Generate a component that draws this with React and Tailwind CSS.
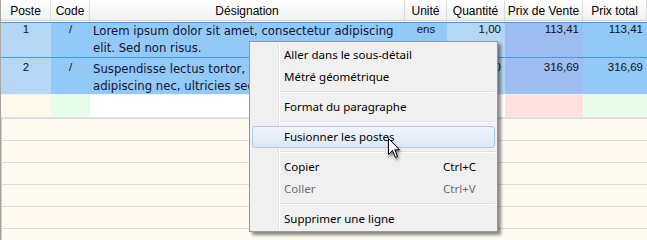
// Bordereau grid with a Windows 7 style context menu
const cols = 'grid grid-cols-[50px_39px_315px_42px_58px_78px_64px]';

const headers = ['Poste', 'Code', 'Désignation', 'Unité', 'Quantité', 'Prix de Vente', 'Prix total'];

const rows = [
  {
    poste: '1',
    code: '/',
    lines: ['Lorem ipsum dolor sit amet, consectetur adipiscing', 'elit. Sed non risus.'],
    unite: 'ens',
    qte: '1,00',
    pv: '113,41',
    total: '113,41',
    height: 'h-[34px]',
    pad: 'pt-0',
  },
  {
    poste: '2',
    code: '/',
    lines: ['Suspendisse lectus tortor, dignissim sit amet,', 'adipiscing nec, ultricies sed, dolor.'],
    unite: 'ens',
    qte: '1,00',
    pv: '316,69',
    total: '316,69',
    height: 'h-[36px]',
    pad: 'pt-[3px]',
  },
];

const num = "font-['Liberation_Sans',Arial,sans-serif] text-[11.5px] leading-[13px] text-[#111]";

function SelectedRow({ r }) {
  return (
    <div className="border-t border-[#3d9cf2]">
      <div className={`${cols} ${r.height} overflow-hidden`}>
        <div className={`bg-[#b5d7f4] text-center ${num} ${r.pad}`}>{r.poste}</div>
        <div className={`bg-[#93c9f7] text-center ${num} ${r.pad}`}>{r.code}</div>
        <div className={`bg-[#93c9f7] pl-[3px] ${r.pad} font-['DejaVu_Sans',sans-serif] text-[11.7px] leading-[17px] text-[#141432] whitespace-nowrap overflow-hidden`}>
          {r.lines.map((l) => (
            <div key={l}>{l}</div>
          ))}
        </div>
        <div className={`bg-[#93c9f7] text-center ${num} ${r.pad}`}>{r.unite}</div>
        <div className={`bg-[#b5d7f4] text-right pr-[4px] ${num} ${r.pad}`}>{r.qte}</div>
        <div className={`bg-[#9ebdf0] text-right pr-[4px] ${num} ${r.pad}`}>{r.pv}</div>
        <div className={`bg-[#93c9f7] text-right pr-[4px] ${num} ${r.pad}`}>{r.total}</div>
      </div>
    </div>
  );
}

function MenuItem({ label, shortcut, disabled, hot }) {
  return (
    <div
      className={`flex h-[22px] items-center leading-[20px] ${
        hot
          ? 'rounded-[3px] border border-[#aecbf0] bg-linear-to-b from-[#f0f5fd] to-[#dde8f8] pl-[31px]'
          : 'pl-[32px]'
      } ${disabled ? 'text-[#6d6d6d]' : 'text-black'}`}
    >
      <span className="flex-1">{label}</span>
      {shortcut && <span className="w-[52px]">{shortcut}</span>}
    </div>
  );
}

function Separator() {
  return (
    <div className="h-[8px] pt-[3px] pl-[28px]">
      <div className="border-t border-b border-t-[#e0e0e0] border-b-white" />
    </div>
  );
}

export default function App() {
  return (
    <div className="relative w-[647px] h-[240px] overflow-hidden bg-white border-l border-[#a5a5a5] flex flex-col">
      {/* header */}
      <div className={`${cols} h-[21px] shrink-0 border-b border-[#d5d5d5] bg-linear-to-b from-white to-[#f1f1f1]`}>
        {headers.map((h) => (
          <div
            key={h}
            className="border-r border-[#dcdcdc] text-center font-['Liberation_Sans',Arial,sans-serif] text-[12px] leading-[22px] text-black whitespace-nowrap"
          >
            {h}
          </div>
        ))}
      </div>
      <div className="h-[1px] shrink-0" />

      {rows.map((r) => (
        <SelectedRow key={r.poste} r={r} />
      ))}

      {/* empty input row */}
      <div className={`${cols} h-[24px] shrink-0 border-t border-b border-t-[#f0f0f0] border-b-[#e4e4e4]`}>
        <div className="bg-[#fff9ed]" />
        <div className="bg-[#e9fdec]" />
        <div className="bg-white" />
        <div className="bg-white" />
        <div className="bg-white" />
        <div className="bg-[#ffe1e2]" />
        <div className="bg-[#eafdec]" />
      </div>

      {/* ruled empty area */}
      <div className="flex-1 border-l border-[#c9c9c9] bg-[#fffaef]">
        {[0, 1, 2, 3, 4, 5].map((i) => (
          <div key={i} className="h-[22px] border-t border-[#dadada]" />
        ))}
      </div>

      {/* context menu */}
      <div className="absolute left-[248px] top-[41px] w-[249px] h-[191px] border border-[#979797] bg-[#f0f0f0] px-[2px] pt-[2px] pb-[1px] shadow-[3px_3px_3px_rgba(0,0,0,0.45)] font-['Noto_Sans',sans-serif] text-[11.5px]">
        <div className="absolute left-[28px] top-[2px] bottom-[2px] w-[2px] border-l border-r border-l-[#e2e3e3] border-r-white" />
        <div className="relative">
          <MenuItem label="Aller dans le sous-détail" />
          <MenuItem label="Métré géométrique" />
          <Separator />
          <MenuItem label="Format du paragraphe" />
          <Separator />
          <MenuItem label="Fusionner les postes" hot />
          <Separator />
          <MenuItem label="Copier" shortcut="Ctrl+C" />
          <MenuItem label="Coller" shortcut="Ctrl+V" disabled />
          <Separator />
          <MenuItem label="Supprimer une ligne" />
        </div>
      </div>

      {/* mouse pointer */}
      <svg
        className="absolute left-[387px] top-[138px] drop-shadow-[1px_2px_1.5px_rgba(0,0,0,0.55)]"
        width="14"
        height="22"
        viewBox="0 0 14 22"
      >
        <path
          d="M0.5 0.5 L0.5 16.5 L4.5 12.5 L7.5 19.5 L9.5 18.5 L6.8 11.8 L11.5 11.8 Z"
          fill="white"
          stroke="black"
          strokeWidth="1"
          strokeLinejoin="miter"
        />
      </svg>
    </div>
  );
}
